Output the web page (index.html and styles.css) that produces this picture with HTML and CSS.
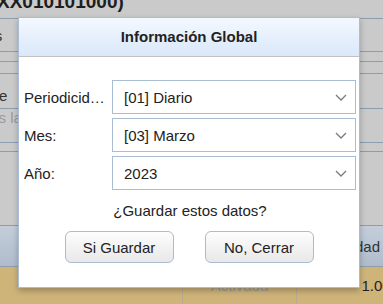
FILE: index.html
```html
<!DOCTYPE html>
<html lang="es">
<head>
    <meta charset="UTF-8">
    <title>Información Global</title>
    <link rel="stylesheet" href="styles.css">
</head>
<body>

    <div class="page">
        <div class="top-title">XX010101000)</div>
        <div class="row r1"><span class="cut">Clientes</span></div>
        <div class="row r2"></div>
        <div class="row r3"></div>
        <div class="row r4"><span class="cut">Nombre</span></div>
        <div class="row r5"><span class="cut muted">Todas las</span></div>
        <div class="row r6"></div>
        <div class="row r7"></div>
        <div class="row head-row"><span class="cut-right">Cantidad</span></div>
        <div class="row data-row">
            <div class="cell c1"></div>
            <div class="cell c2"><span class="muted">Activada</span></div>
            <div class="cell c3"><span>1.000</span></div>
        </div>
    </div>

    <div class="dialog">
        <div class="dialog-header">Información Global</div>
        <div class="dialog-body">
            <div class="fields">
                <label>Periodicid…</label>
                <div class="select">
                    <span>[01] Diario</span>
                    <svg width="12" height="7" viewBox="0 0 12 7"><path d="M1 1 L6 6 L11 1" fill="none" stroke="#7a7a7a" stroke-width="1.3"/></svg>
                </div>

                <label>Mes:</label>
                <div class="select">
                    <span>[03] Marzo</span>
                    <svg width="12" height="7" viewBox="0 0 12 7"><path d="M1 1 L6 6 L11 1" fill="none" stroke="#7a7a7a" stroke-width="1.3"/></svg>
                </div>

                <label>Año:</label>
                <div class="select">
                    <span>2023</span>
                    <svg width="12" height="7" viewBox="0 0 12 7"><path d="M1 1 L6 6 L11 1" fill="none" stroke="#7a7a7a" stroke-width="1.3"/></svg>
                </div>
            </div>

            <p class="question">¿Guardar estos datos?</p>

            <div class="buttons">
                <button type="button">Si Guardar</button>
                <button type="button">No, Cerrar</button>
            </div>
        </div>
    </div>

</body>
</html>
```

FILE: styles.css
```css
body {
    margin: 0;
    font-family: "Liberation Sans", Arial, sans-serif;
    background-color: #cacaca;
    color: #222;
    overflow: hidden;
}

.page {
    width: 383px;
    height: 304px;
    position: relative;
    overflow: hidden;
}

.top-title {
    margin-left: -3px;
    margin-top: -8px;
    height: 27px;
    box-sizing: border-box;
    font-size: 19px;
    font-weight: bold;
    line-height: 19px;
    color: #1e1e1e;
    border-bottom: 1px solid #8e9dad;
}

.row {
    border-bottom: 1px solid #8e9dad;
    box-sizing: border-box;
    font-size: 15px;
    display: flex;
    align-items: center;
}

.r1 { height: 33px; }
.r2 { height: 10px; }
.r3 { height: 12px; }
.r4 { height: 35px; align-items: flex-end; padding-bottom: 4px; }
.r5 { height: 34px; align-items: flex-start; }
.r6 { height: 9px; }
.r7 { height: 74px; }

.cut {
    margin-left: -46px;
    color: #333;
}

.r1 .cut { margin-left: -52px; }
.r5 .cut { margin-left: -34px; }

.muted {
    color: #9a9a9a;
}

.head-row {
    height: 41px;
    background: linear-gradient(#c4ceda, #b0bccb);
    justify-content: flex-end;
}

.cut-right {
    margin-right: 3px;
    color: #333;
}

.data-row {
    height: 38px;
    background-color: #cfb47a;
    align-items: stretch;
}

.cell {
    border-right: 1px solid #b8ab90;
    display: flex;
    align-items: center;
}

.c1 { width: 182px; }
.c2 { width: 113px; justify-content: center; }
.c3 { flex: 1; border-right: none; justify-content: flex-end; }
.c3 span { margin-right: -16px; }

.dialog {
    position: absolute;
    left: 18px;
    top: 17px;
    width: 342px;
    height: 271px;
    box-sizing: border-box;
    background-color: #fff;
    border: 1px solid #a7bed6;
    box-shadow: 0 3px 6px rgba(0, 0, 0, 0.25);
}

.dialog-header {
    height: 39px;
    box-sizing: border-box;
    background: linear-gradient(#f3f8fe, #dae8fa);
    border-bottom: 1px solid #c2c2c2;
    text-align: center;
    font-size: 15px;
    font-weight: bold;
    line-height: 38px;
    color: #222;
}

.dialog-body {
    padding: 23px 3px 0 5px;
}

.fields {
    display: grid;
    grid-template-columns: 88px 1fr;
    row-gap: 4px;
    align-items: center;
}

label {
    font-size: 15px;
    color: #222;
}

.select {
    height: 34px;
    box-sizing: border-box;
    border: 1px solid #a9bed2;
    display: flex;
    align-items: center;
    justify-content: space-between;
    padding: 0 8px 0 11px;
    font-size: 15px;
    color: #222;
}

.question {
    margin: 12px 0 0;
    text-align: center;
    font-size: 15px;
    color: #222;
}

.buttons {
    display: flex;
    justify-content: center;
    gap: 31px;
    margin-top: 12px;
    padding-right: 2px;
}

button {
    width: 109px;
    height: 32px;
    font-family: "Liberation Sans", Arial, sans-serif;
    font-size: 15px;
    color: #222;
    background: linear-gradient(#fdfdfd, #e8e8e8);
    border: 1px solid #a9bcd0;
    border-radius: 6px;
}
```
